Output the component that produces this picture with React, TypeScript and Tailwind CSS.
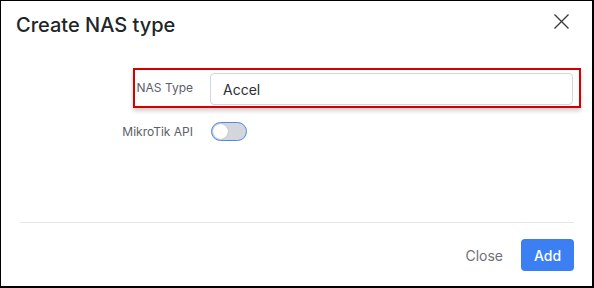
export default function App() {
  return (
    <div className="w-[594px] h-[288px] bg-white border-black border-l border-t border-r-2 border-b-2 flex flex-col font-['Inter',sans-serif]">
      {/* header */}
      <header className="flex items-start justify-between pl-[15px] pr-[23px] pt-[10px]">
        <h2 className="text-[20px] leading-[28px] font-medium text-[#212529]">
          Create NAS type
        </h2>
        <button className="mt-[3px] text-[#3a3a3a]" aria-label="Close">
          <svg width="15" height="15" viewBox="0 0 15 15" fill="none" stroke="currentColor" strokeWidth="1.4">
            <path d="M0.5 0.5 14.5 14.5M14.5 0.5 0.5 14.5" />
          </svg>
        </button>
      </header>

      {/* body */}
      <main className="flex-1 flex flex-col pt-[29px]">
        <div className="ml-[132px] w-[448px] h-[40px] border-2 border-[#d40000] shadow-[0_3px_4px_rgba(0,0,0,0.18)] flex items-center">
          <label className="w-[58px] text-right text-[12px] text-[#5b6066]">NAS Type</label>
          <input
            type="text"
            value="Accel"
            readOnly
            className="ml-[17px] mt-[2px] w-[363px] h-[32px] border border-[#d3d6dc] rounded-[4px] pl-[12px] text-[14px] text-[#2b2f33] outline-none"
          />
        </div>
        <div className="mt-[14px] h-[19px] flex items-center">
          <label className="w-[192px] text-right text-[12px] text-[#5b6066]">MikroTik API</label>
          <div className="ml-[18px] w-[36px] h-[19px] rounded-full border border-[#4f86ee] bg-[#d3d6db] p-[1px] flex items-center">
            <div className="w-[15px] h-[15px] rounded-full bg-white shadow-[0_0_1px_rgba(0,0,0,0.3)]" />
          </div>
        </div>
      </main>

      {/* footer */}
      <footer className="ml-[19px] mr-[18px] border-t border-[#e6e6e6] pt-[16px] pb-[15px] flex items-center justify-end gap-[6px]">
        <button className="h-[32px] px-[12px] text-[14px] text-[#6c7178]">Close</button>
        <button className="w-[53px] h-[32px] rounded-[4px] bg-[#3b7ff2] text-white text-[14px] font-medium">
          Add
        </button>
      </footer>
    </div>
  );
}
